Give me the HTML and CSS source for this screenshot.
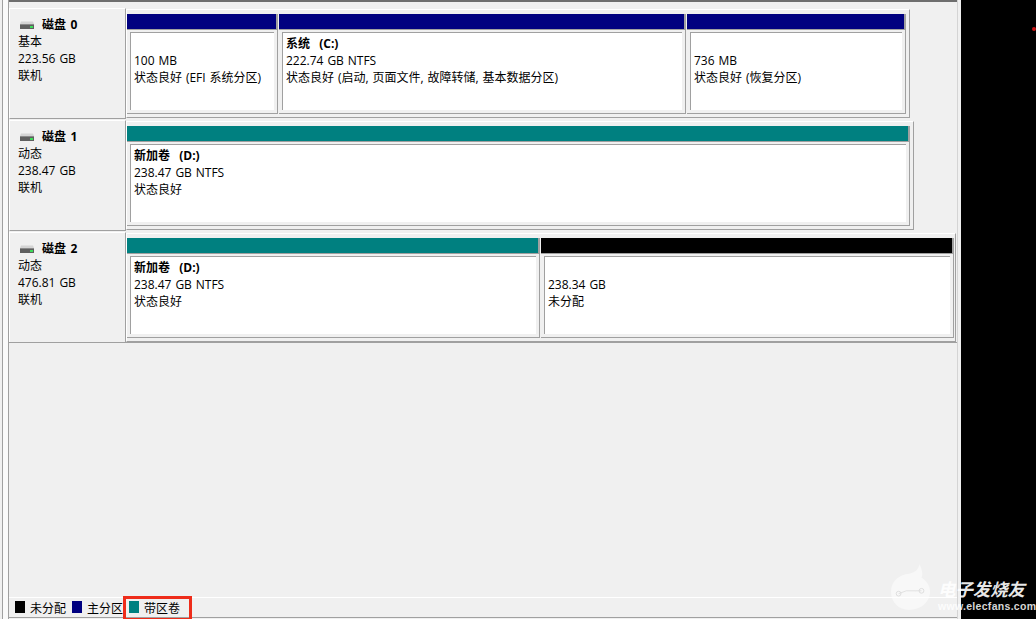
FILE: index.html
```html
<!DOCTYPE html>
<html lang="zh-CN">
<head>
<meta charset="utf-8">
<title>磁盘管理</title>
<link rel="stylesheet" href="styles.css">
</head>
<body>
<div class="page">
  <div class="window">
    <div class="rail"></div>
    <div class="main">
      <div class="topline"></div>
      <div class="disks">
        <section class="disk">
          <div class="label">
            <div class="title"><svg class="hdd" viewBox="0 0 14 8"><path d="M1 0.5h12l1 2.5H0z" fill="#d4d4d4"/><rect x="0" y="3" width="14" height="5" fill="#5f5f5f"/><rect x="0" y="3" width="14" height="1" fill="#8a8a8a"/><rect x="10" y="5" width="3" height="2" fill="#3ddc5a"/></svg><b>磁盘 0</b></div>
            <div>基本</div><div>223.56 GB</div><div>联机</div>
          </div>
          <div class="volumes vol-0">
            <div class="part w-a"><div class="bar navy"></div><div class="body"><div class="info"><div>&nbsp;</div><div>100 MB</div><div>状态良好 (EFI 系统分区)</div></div></div></div>
            <div class="part w-b"><div class="bar navy"></div><div class="body"><div class="info"><div><b>系统&nbsp;&nbsp;(C:)</b></div><div>222.74 GB NTFS</div><div>状态良好 (启动, 页面文件, 故障转储, 基本数据分区)</div></div></div></div>
            <div class="part w-c"><div class="bar navy"></div><div class="body"><div class="info"><div>&nbsp;</div><div>736 MB</div><div>状态良好 (恢复分区)</div></div></div></div>
          </div>
        </section>
        <section class="disk">
          <div class="label">
            <div class="title"><svg class="hdd" viewBox="0 0 14 8"><path d="M1 0.5h12l1 2.5H0z" fill="#d4d4d4"/><rect x="0" y="3" width="14" height="5" fill="#5f5f5f"/><rect x="0" y="3" width="14" height="1" fill="#8a8a8a"/><rect x="10" y="5" width="3" height="2" fill="#3ddc5a"/></svg><b>磁盘 1</b></div>
            <div>动态</div><div>238.47 GB</div><div>联机</div>
          </div>
          <div class="volumes vol-1">
            <div class="part w-d"><div class="bar teal"></div><div class="body"><div class="info"><div><b>新加卷&nbsp;&nbsp;(D:)</b></div><div>238.47 GB NTFS</div><div>状态良好</div></div></div></div>
          </div>
        </section>
        <section class="disk last">
          <div class="label">
            <div class="title"><svg class="hdd" viewBox="0 0 14 8"><path d="M1 0.5h12l1 2.5H0z" fill="#d4d4d4"/><rect x="0" y="3" width="14" height="5" fill="#5f5f5f"/><rect x="0" y="3" width="14" height="1" fill="#8a8a8a"/><rect x="10" y="5" width="3" height="2" fill="#3ddc5a"/></svg><b>磁盘 2</b></div>
            <div>动态</div><div>476.81 GB</div><div>联机</div>
          </div>
          <div class="volumes vol-2">
            <div class="part w-e"><div class="bar teal"></div><div class="body"><div class="info"><div><b>新加卷&nbsp;&nbsp;(D:)</b></div><div>238.47 GB NTFS</div><div>状态良好</div></div></div></div>
            <div class="part w-e"><div class="bar black"></div><div class="body"><div class="info"><div>&nbsp;</div><div>238.34 GB</div><div>未分配</div></div></div></div>
          </div>
        </section>
      </div>
      <div class="legend">
        <div class="key"><span class="swatch black"></span>未分配</div>
        <div class="key"><span class="swatch navy"></span>主分区</div>
        <div class="key"><span class="swatch teal"></span>带区卷<span class="highlight"></span></div>
      </div>
    </div>
  </div>
  <div class="side"><span class="dot"></span></div>
  <div class="watermark">
    <svg class="wm-logo" viewBox="0 0 44 50"><path d="M20 49C9 49 1 41 1 30S9 12 20 11C27 10 30 6 31 1C35 10 34 14 33 15C39 19 42 24 42 30C42 41 32 49 20 49Z" fill="#fff" fill-opacity=".5"/><path d="M9 32L17 29H27L33 29" fill="none" stroke="#e0e0e0" stroke-width="1"/><circle cx="9" cy="32" r="2.5" fill="none" stroke="#dcdcdc"/><circle cx="33" cy="29" r="2.5" fill="none" stroke="#dcdcdc"/></svg>
    <div class="wm-text"><div class="wm-cn">电子发烧友</div><div class="wm-en">www.elecfans.com</div></div>
  </div>
</div>
</body>
</html>
```

FILE: styles.css
```css
* { box-sizing: border-box; }
html, body { margin: 0; padding: 0; }
body { background: #000; }
.page {
  position: relative;
  display: flex;
  width: 1036px;
  height: 619px;
  overflow: hidden;
  font: 12px/17px "Open Sans", "Noto Sans CJK SC", sans-serif;
  word-spacing: .8px;
  color: #000;
}
b { word-spacing: 1.5px; }
.window {
  display: flex;
  flex: none;
  width: 961px;
  height: 619px;
  background: #f0f0f0;
  padding-right: 3px;
}
.rail {
  flex: none;
  width: 7px;
  margin: 0 0 0 2px;
  background: #fafafa;
  border-left: 1px solid #a0a0a0;
  border-right: 1px solid #a0a0a0;
}
.main {
  display: flex;
  flex-direction: column;
  width: 949px;
  border-right: 1px solid #d4d4d4;
}
.topline { height: 2px; background: #6e6e6e; flex: none; }
.disks { margin-top: 6px; }
.disk { display: flex; height: 112px; align-items: flex-start; }
.disk.last { height: 111px; border-bottom: 1px solid #a0a0a0; width: 948px; }
.label {
  flex: none;
  width: 117px;
  height: 111px;
  padding: 7px 0 0 8px;
  background: #f0f0f0;
  border-top: 1px solid #fff;
  border-left: 1px solid #fff;
  border-right: 1px solid #a0a0a0;
  border-bottom: 1px solid #a0a0a0;
}
.disk.last .label { height: 110px; border-bottom: 0; }
.title { display: flex; align-items: center; }
.hdd { width: 14px; height: 8px; margin: 0 8px 0 2px; flex: none; }
.volumes {
  display: flex;
  height: 109px;
  margin-top: 1px;
  padding: 4px 3px 3px 0;
  border-top: 1px solid #fff;
  border-left: 1px solid #fff;
  border-right: 1px solid #a0a0a0;
  border-bottom: 1px solid #a0a0a0;
  gap: 1px;
}
.vol-0 { width: 784px; }
.vol-1 { width: 788px; }
.vol-2 { width: 830px; padding-right: 1px; }
.part {
  display: flex;
  flex-direction: column;
  flex: none;
  height: 100px;
  border-right: 1px solid #a0a0a0;
  border-bottom: 1px solid #a0a0a0;
}
.w-a { width: 151px; }
.w-b { width: 407px; }
.w-c { width: 219px; }
.w-d { width: 783px; }
.w-e { width: 413px; }
.bar { height: 16px; border-bottom: 1px solid #a0a0a0; border-right: 1px solid #a0a0a0; flex: none; }
.bar.navy { background: #000080; }
.bar.teal { background: #008080; }
.bar.black { background: #000; }
.body { flex: 1; padding: 2px 3px 3px; min-height: 0; }
.info {
  height: 100%;
  padding: 2px 0 0 3px;
  background: #fff;
  border-top: 1px solid #a0a0a0;
  border-left: 1px solid #a0a0a0;
  white-space: nowrap;
}
.legend {
  display: flex;
  flex: none;
  gap: 6px;
  height: 21px;
  margin-top: auto;
  margin-bottom: 1px;
  padding: 2px 0 0 6px;
  border-top: 1px solid #fff;
  border-bottom: 1px solid #a0a0a0;
}
.key { position: relative; display: flex; align-items: flex-start; }
.swatch { flex: none; width: 10px; height: 12px; margin: 1px 5px 0 0; }
.swatch.black { background: #000; }
.swatch.navy { background: #000080; }
.swatch.teal { background: #008080; }
.highlight {
  position: absolute;
  left: -6px;
  top: -4px;
  width: 69px;
  height: 25px;
  border: 3px solid #ee2c1a;
}
.side { position: relative; flex: 1; background: #000; }
.dot {
  position: absolute;
  left: 71px;
  top: 27px;
  width: 4px;
  height: 4px;
  border-radius: 50%;
  background: #c81414;
}
.watermark {
  position: absolute;
  left: 890px;
  top: 563px;
  display: flex;
  gap: 6px;
}
.wm-logo { width: 42px; height: 48px; flex: none; }
.wm-text { padding-top: 16px; }
.wm-cn {
  font: italic bold 17.4px/20px "Noto Sans CJK SC", sans-serif;
  color: rgba(255, 255, 255, .92);
  white-space: nowrap;
}
.wm-en {
  margin-top: 1px;
  font: bold 10.5px/12px "Liberation Sans", sans-serif;
  letter-spacing: .3px;
  word-spacing: 0;
  color: rgba(255, 255, 255, .85);
  white-space: nowrap;
}
```
